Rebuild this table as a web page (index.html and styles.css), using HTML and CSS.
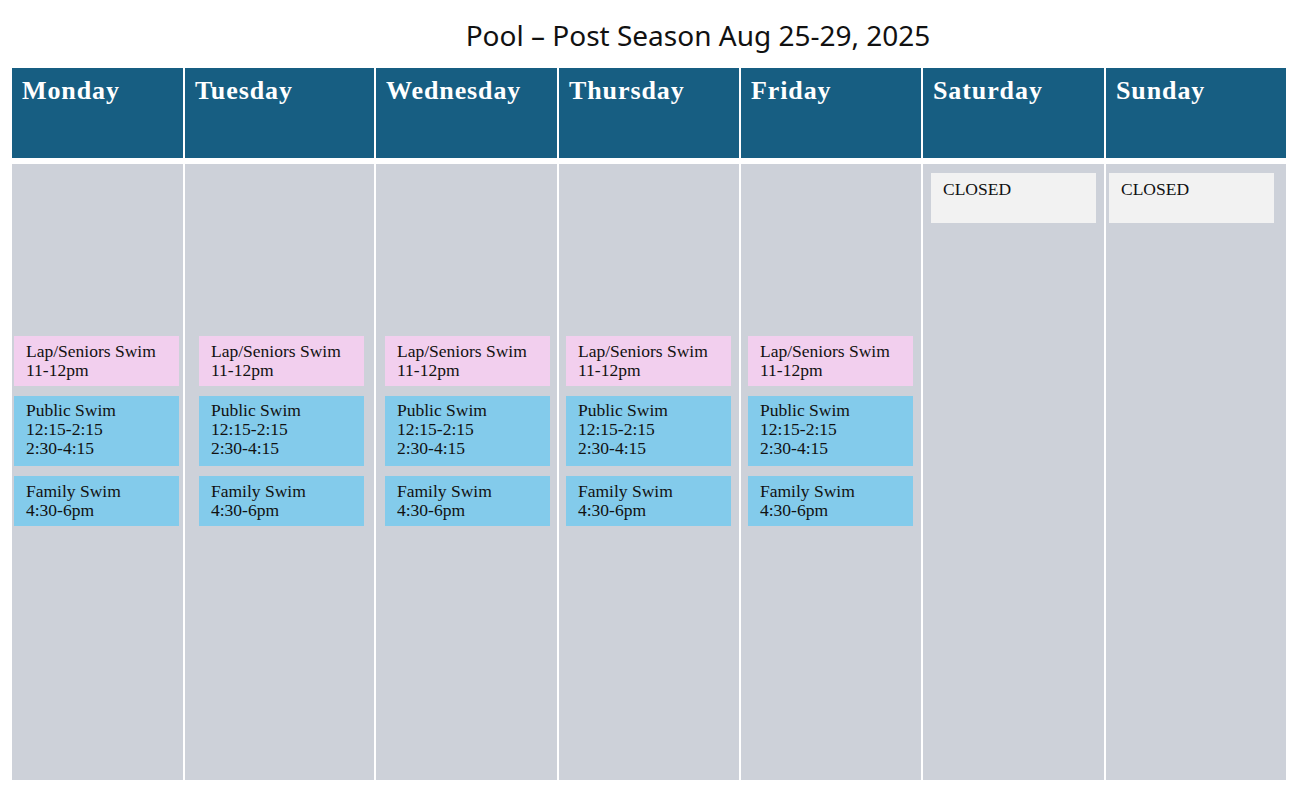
FILE: index.html
```html
<!DOCTYPE html>
<html>
<head>
<meta charset="utf-8">
<link rel="stylesheet" href="styles.css">
</head>
<body>
<h1 class="title">Pool – Post Season Aug 25-29, 2025</h1>
<div class="cal">
  <div class="hd">Monday</div>
  <div class="hd">Tuesday</div>
  <div class="hd">Wednesday</div>
  <div class="hd">Thursday</div>
  <div class="hd">Friday</div>
  <div class="hd">Saturday</div>
  <div class="hd">Sunday</div>

  <div class="col open c-mon">
    <div class="ev pink">Lap/Seniors Swim<br>11-12pm</div>
    <div class="ev blue tall">Public Swim<br>12:15-2:15<br>2:30-4:15</div>
    <div class="ev blue">Family Swim<br>4:30-6pm</div>
  </div>
  <div class="col open c-tue">
    <div class="ev pink">Lap/Seniors Swim<br>11-12pm</div>
    <div class="ev blue tall">Public Swim<br>12:15-2:15<br>2:30-4:15</div>
    <div class="ev blue">Family Swim<br>4:30-6pm</div>
  </div>
  <div class="col open c-wed">
    <div class="ev pink">Lap/Seniors Swim<br>11-12pm</div>
    <div class="ev blue tall">Public Swim<br>12:15-2:15<br>2:30-4:15</div>
    <div class="ev blue">Family Swim<br>4:30-6pm</div>
  </div>
  <div class="col open c-thu">
    <div class="ev pink">Lap/Seniors Swim<br>11-12pm</div>
    <div class="ev blue tall">Public Swim<br>12:15-2:15<br>2:30-4:15</div>
    <div class="ev blue">Family Swim<br>4:30-6pm</div>
  </div>
  <div class="col open c-fri">
    <div class="ev pink">Lap/Seniors Swim<br>11-12pm</div>
    <div class="ev blue tall">Public Swim<br>12:15-2:15<br>2:30-4:15</div>
    <div class="ev blue">Family Swim<br>4:30-6pm</div>
  </div>
  <div class="col shut c-sat">
    <div class="ev closed">CLOSED</div>
  </div>
  <div class="col shut c-sun">
    <div class="ev closed">CLOSED</div>
  </div>
</div>
</body>
</html>
```

FILE: styles.css
```css
html, body {
  margin: 0;
  padding: 0;
  background: #ffffff;
}
body {
  padding: 0 12px;
}
.title {
  margin: 0;
  height: 68px;
  box-sizing: border-box;
  padding: 17px 0 0 96px;
  text-align: center;
  font-family: "Noto Sans", "Liberation Sans", sans-serif;
  font-weight: 400;
  font-size: 28px;
  line-height: 36px;
  color: #111111;
}
.cal {
  display: grid;
  grid-template-columns: 171px 189px 181px 180px 180px 181px 180px;
  grid-template-rows: 90px 616px;
  column-gap: 2px;
  row-gap: 6px;
  width: 1274px;
}
.hd {
  background: #175e82;
  color: #ffffff;
  font-family: "Liberation Serif", "DejaVu Serif", serif;
  font-weight: 700;
  font-size: 26px;
  line-height: 30px;
  padding: 8px 0 0 10px;
  letter-spacing: 0.9px;
}
.col {
  background: #cdd1d9;
  display: flex;
  flex-direction: column;
  gap: 10px;
  box-sizing: border-box;
}
.col.open { padding-top: 172px; }
.col.shut { padding-top: 9px; }
.ev {
  width: 165px;
  box-sizing: border-box;
  font-family: "Liberation Serif", "Times New Roman", serif;
  font-size: 17.5px;
  line-height: 19px;
  color: #111111;
  padding: 6px 0 0 12px;
  height: 50px;
}
.ev.tall { height: 70px; padding-top: 5px; }
.pink { background: #f2cfee; }
.blue { background: #83cbeb; }
.closed { background: #f2f2f2; padding-top: 7px; }
.c-mon { padding-left: 2px; }
.c-tue { padding-left: 14px; }
.c-wed { padding-left: 9px; }
.c-thu { padding-left: 7px; }
.c-fri { padding-left: 7px; }
.c-sat { padding-left: 8px; }
.c-sun { padding-left: 3px; }
```
